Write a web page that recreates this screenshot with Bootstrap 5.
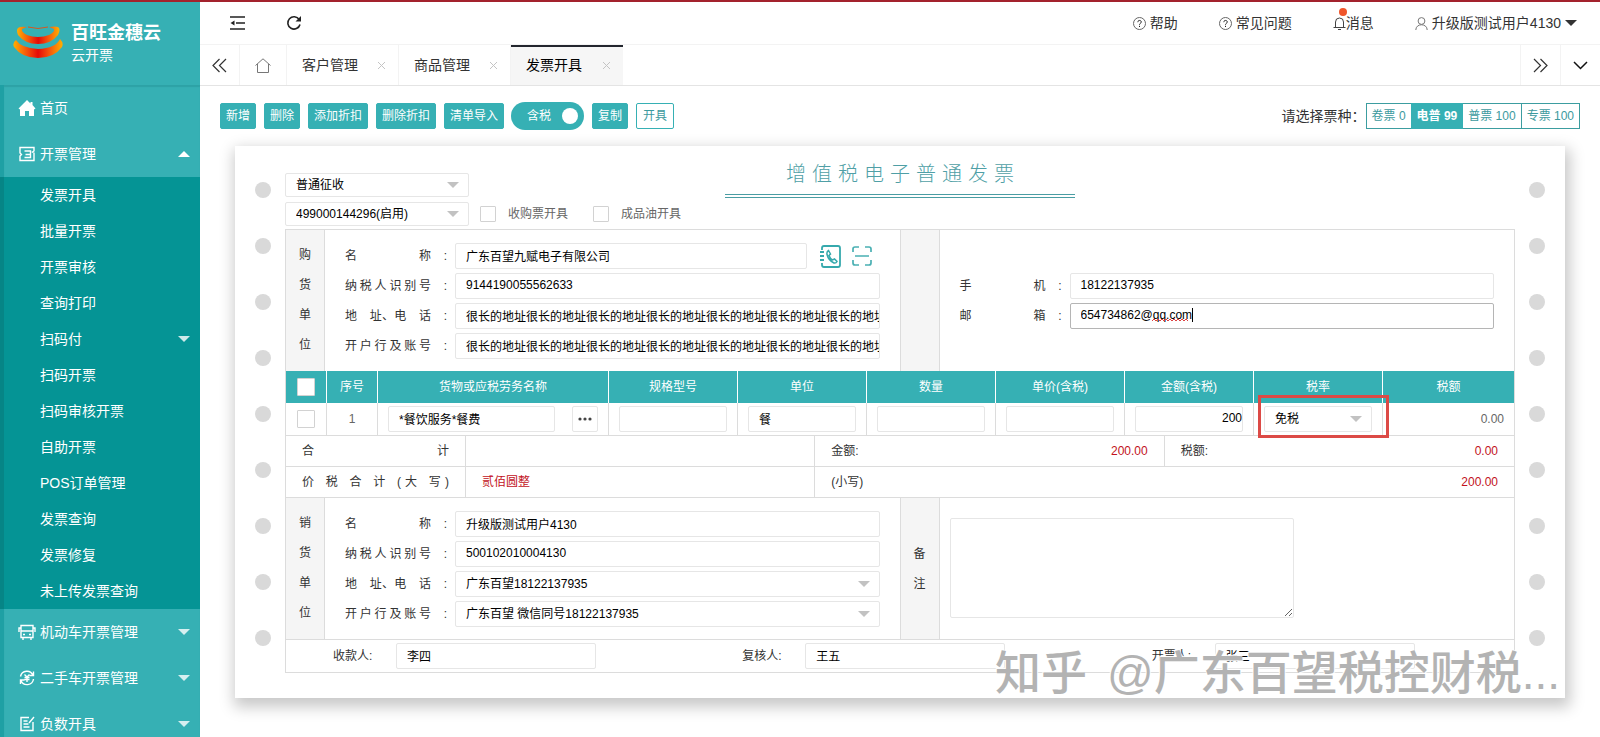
<!DOCTYPE html>
<html lang="zh-CN">
<head>
<meta charset="utf-8">
<meta name="viewport" content="width=device-width, initial-scale=1">
<title>百旺金穗云 - 云开票</title>
<link href="https://cdn.jsdelivr.net/npm/bootstrap@5.3.0/dist/css/bootstrap.min.css" rel="stylesheet">
<style>
:root{--teal:#36b0b4;--teal-dark:#059495;--line:#dcdcdc;--soft:#e6e6e6}
body{font-family:"Liberation Sans","Noto Sans CJK SC",sans-serif;font-size:14px;line-height:20px;color:#333;background:#fff}
a{color:inherit;text-decoration:none}
.topline{height:2px;background:#a3222d;flex:none}
/* sidebar */
.side{width:200px;flex:none;background:var(--teal);color:#fff}
.brand{height:83px;padding:0 0 2px 13px;gap:8px}
.brand-name{font-size:18px;line-height:24px;font-weight:700}
.menu-wrap{border-left:4px solid #1fa0a4;box-shadow:inset 0 2px 1px rgba(0,90,90,.15)}
.menu-item{height:46px;padding:0 10px 0 14px}
.menu-item svg{width:18px;height:18px;margin-right:4px}
.menu-item svg.ico-s{width:16px;height:16px;margin:0 5px 0 1px}
.sub{background:var(--teal-dark);margin-left:-4px;border-left:4px solid #068586}
.sub a{height:36px;padding:0 10px 0 36px}
.tri{width:0;height:0;border:6px solid transparent;border-bottom-width:0;border-top-color:currentColor;opacity:.8}
.tri-up{border-bottom:6px solid #fff;border-top-width:0;opacity:1}
/* header */
.head{height:43px;border-bottom:1px solid #f3f3f3;padding:0 23px 0 29px}
.head-links{gap:41px}
.icon-btn{border:0;background:none;padding:0;display:flex;align-items:center;justify-content:center}
.msg-dot{position:absolute;left:6px;top:-5px;width:8px;height:8px;border-radius:50%;background:#f0562b}
.tabs{height:41px;border-bottom:1px solid #e4e4e4}
.tabs-cell{width:40px;border-right:1px solid #f3f3f3}
.tabs-home{width:47px}
.tab-item{width:112px;padding:0 12px 0 15px;border-right:1px solid #f3f3f3}
.tab-item.current{border-top:2px solid #23262e;padding-bottom:2px;background:#f6f6f6;color:#000;border-right:0}
.tab-right{width:40px;border-left:1px solid #f3f3f3}
/* toolbar */
.tools{padding:16px 20px 0;gap:8px}
.btn-t{--bs-btn-bg:var(--teal);--bs-btn-color:#fff;--bs-btn-border-color:var(--teal);--bs-btn-hover-bg:#2c9fa3;--bs-btn-hover-color:#fff;font-size:12px;line-height:18px;padding:3px 5px;border-radius:2px}
.btn-line{--bs-btn-bg:#fff;--bs-btn-color:#3c9a9e;padding:3px 6px}
.tax-switch{height:28px;width:73px;border-radius:14px;background:var(--teal);color:#fff;font-size:12px;padding:0 6px 0 16px;margin:0 0 0 -1px;cursor:pointer}
.tax-switch input{appearance:none;width:16px;height:16px;border-radius:50%;background:#fff;margin:0}
.kinds .btn{font-size:12px;line-height:18px;padding:3px 5px;border:1px solid #3c9da0;color:#3c9a9e;border-radius:0}
.kinds .btn-check:checked+.btn{background:var(--teal);border-color:var(--teal);color:#fff;font-weight:700}
/* invoice sheet */
.sheet{margin:16px 35px 0;padding:0 20px 25px;box-shadow:2px 6px 14px 3px rgba(0,0,0,.22);font-size:12px;line-height:18px}
.holes{width:16px;flex:none;gap:40px;padding-top:36px}
.holes i{width:16px;height:16px;border-radius:50%;background:#d9d9d9}
.sheet-body{padding:0 14px}
.sheet-top{height:83px;position:relative}
.sheet-title{position:absolute;left:50%;top:14px;width:350px;margin-left:-175px;height:38px;border-bottom:4px double #4a9da3;color:#4f9fa6}
.sheet-title h1{font-family:KaiTi,"Liberation Serif","Noto Sans CJK SC",serif;font-size:20px;line-height:28px;font-weight:300;width:228px;margin:0 auto;text-align-last:justify}
.fld{display:block;height:26px;width:100%;min-width:0;border:1px solid var(--soft);border-radius:2px;background:#fff;color:#000;font-size:12px;line-height:18px;padding:0 10px 2px}
.fld:focus{outline:0;border-color:#bbb;box-shadow:none}
select.fld{appearance:none;padding-bottom:0;background:#fff url("data:image/svg+xml,%3Csvg xmlns='http://www.w3.org/2000/svg' width='12' height='6'%3E%3Cpath d='M0 0h12L6 6z' fill='%23c2c2c2'/%3E%3C/svg%3E") no-repeat right 9px center}
.top-opts{padding-top:27px;gap:5px}
.top-opts select.fld{width:184px;height:24px}
.box-check{appearance:none;width:16px;height:16px;border:1px solid #d2d2d2;background:#fff;margin:0;flex:none;border-radius:1px}
.opt-label{color:#666;padding-left:12px}
.frame{border:1px solid var(--line)}
.party{display:grid;grid-template-columns:39px minmax(0,1fr) 40px minmax(0,1fr)}
.vcol{background:#f5f5f5;padding-top:10px;line-height:30px;border-right:1px solid var(--line)}
.vcol.mid{border-left:1px solid var(--line);padding-top:0}
.party-form{padding:13px 20px 12px;display:flex;flex-direction:column;gap:4px}
.frow{display:flex;align-items:center}
.frow label{width:86px;flex:none;text-align-last:justify}
.colon{width:24px;flex:none;text-align:right;padding-right:8px}
.fld.live{border-color:#b5b5b5}
.typed{position:absolute;left:82px;top:4px;pointer-events:none}
.items{table-layout:fixed;width:100%;border-collapse:separate;border-spacing:0}
.items th{height:32px;background:var(--teal);color:#fff;font-weight:400;text-align:center;border-right:1px solid #fff;padding:0}
.items td{height:33px;border-right:1px solid var(--line);border-bottom:1px solid var(--line);padding:0 10px;color:#666}
.items th:last-child,.items td:last-child{border-right:0}
.c-check{width:41px}.c-no{width:51px}.c-name{width:231px}.c-std{width:129px}
.items .box-check{width:18px;height:18px;display:block;margin:0 auto}
.more-btn{width:26px;height:26px;border:1px solid var(--soft);background:#fff;border-radius:2px;padding:0;flex:none;display:flex;align-items:center;justify-content:center}
.rate-box{position:absolute;left:-6px;right:-17px;top:-11px;bottom:-6px;border:3px solid #dc4a46;pointer-events:none}
.sum{display:grid;grid-template-columns:180px minmax(0,1fr) minmax(0,1fr) minmax(0,1fr);border-bottom:1px solid var(--line);height:31px}
.sum>div{display:flex;align-items:center;justify-content:space-between;padding:0 16px;border-right:1px solid var(--line)}
.sum>div:last-child{border-right:0}
.sum .wide{grid-column:span 2}
.just{display:block;width:100%;text-align-last:justify}
.red{color:#c2121c}
.note{height:100px;width:60%;margin:20px 0 0 10px;resize:both}
.signers{display:grid;grid-template-columns:repeat(3,minmax(0,1fr));border-top:1px solid var(--line);padding:3px 0}
.signers>div{display:flex;align-items:center;padding-left:47px}
.signers label{width:63px;flex:none}
.signers .fld{width:200px}
.wmark{position:absolute;right:5px;bottom:-3px;font-size:46px;line-height:56px;color:#b3b3b3;font-weight:500;gap:20px;white-space:nowrap;pointer-events:none;text-shadow:-1px -1px 1px #fff,1px 1px 1px #fff}
</style>
</head>
<body>
<div class="vh-100 d-flex flex-column overflow-hidden">
<div class="topline"></div>
<div class="d-flex flex-grow-1 overflow-hidden">
<aside class="side overflow-hidden">
  <div class="brand d-flex align-items-center">
    <svg width="50" height="33" viewBox="0 0 50 33" aria-hidden="true">
      <defs><linearGradient id="lg"><stop offset="0" stop-color="#ffb000"/><stop offset=".28" stop-color="#f5520c"/><stop offset=".5" stop-color="#e60a08"/><stop offset=".72" stop-color="#f5520c"/><stop offset="1" stop-color="#ffb000"/></linearGradient></defs>
      <path d="M5 2Q3 4 5 9Q12 18 25 18Q38 18 45 9Q48 3 45 1Q42 0 36 1L41 3Q42 6 36 9Q31 11 25 11Q19 11 14 9Q8 6 9 3L14 1Q7 0 5 2Z" fill="url(#lg)"/>
      <path d="M3 14Q-1 17 1 21Q9 32 25 32Q41 32 49 21Q51 17 47 13Q43 22 25 23Q8 22 3 14Z" fill="url(#lg)"/>
      <path d="M15 1Q25 4 35 1" stroke="#d6571f" fill="none"/>
    </svg>
    <div><div class="brand-name">百旺金穗云</div><div>云开票</div></div>
  </div>
  <nav class="menu-wrap">
    <a href="#" class="menu-item d-flex align-items-center"><svg viewBox="0 0 18 18"><path d="M9 1 0.5 9.5 2 10.5V17h5v-5h4v5h5v-6.500l1.500-1L14.500 6V3h-2v1.500z" fill="#fff"/></svg>首页</a>
    <a href="#" class="menu-item d-flex align-items-center"><svg class="ico-s" viewBox="1 1 16 16" fill="none" stroke="#fff" stroke-width="1.400"><path d="M2 6V2.500h14V6L14.500 7 16 8v7.500H2V11l1.500-1.500L2 8zM6.500 6h6v3.500l-5 0M12.500 9.500V12.500h-6"/></svg>开票管理<span class="tri tri-up ms-auto"></span></a>
    <div class="sub">
      <a href="#" class="d-flex align-items-center">发票开具</a>
      <a href="#" class="d-flex align-items-center">批量开票</a>
      <a href="#" class="d-flex align-items-center">开票审核</a>
      <a href="#" class="d-flex align-items-center">查询打印</a>
      <a href="#" class="d-flex align-items-center">扫码付<span class="tri ms-auto"></span></a>
      <a href="#" class="d-flex align-items-center">扫码开票</a>
      <a href="#" class="d-flex align-items-center">扫码审核开票</a>
      <a href="#" class="d-flex align-items-center">自助开票</a>
      <a href="#" class="d-flex align-items-center">POS订单管理</a>
      <a href="#" class="d-flex align-items-center">发票查询</a>
      <a href="#" class="d-flex align-items-center">发票修复</a>
      <a href="#" class="d-flex align-items-center">未上传发票查询</a>
    </div>
    <a href="#" class="menu-item d-flex align-items-center"><svg viewBox="0 0 18 18" fill="none" stroke="#fff" stroke-width="1.400"><path d="M3 14.500V2.500h12v12zM3 8h12M3 5H1v4M15 5h2v4M5 11.500h2M11 11.500h2M5 14.500V17M13 14.500V17"/></svg>机动车开票管理<span class="tri ms-auto"></span></a>
    <a href="#" class="menu-item d-flex align-items-center"><svg class="ico-s" viewBox="1 1 16 16" fill="none" stroke="#fff" stroke-width="1.400"><path d="M2.500 7.500A6.500 6.500 0 0 1 15 6.500M15.500 2.500v4h-4M15.500 10A6.500 6.500 0 0 1 3 11.500M2.500 15v-4h4M6.500 5.500 9 8l2.500-2.500M9 8v5M6.500 8.500h5M6.500 10.500h5"/></svg>二手车开票管理<span class="tri ms-auto"></span></a>
    <a href="#" class="menu-item d-flex align-items-center"><svg class="ico-s" viewBox="1 1 16 16" fill="none" stroke="#fff" stroke-width="1.400"><path d="M11 2.500H3v13h12V7M5.500 6h4M5.500 9h5M5.500 12h6M11 8l5-6"/></svg>负数开具<span class="tri ms-auto"></span></a>
  </nav>
</aside>

<main class="flex-grow-1 overflow-hidden">
  <header class="head d-flex align-items-center justify-content-between">
    <div class="d-flex" style="gap:40px">
      <button class="icon-btn" type="button" aria-label="收起菜单"><svg width="17" height="16" viewBox="0 0 17 16" fill="none" stroke="#222" stroke-width="1.600"><path d="M1 2h15M7 8h9M1 14h15"/><path d="M5.500 5.500v5L1.500 8z" fill="#222" stroke="none"/></svg></button>
      <button class="icon-btn" type="button" aria-label="刷新"><svg width="16" height="16" viewBox="0 0 16 16" fill="none" stroke="#222" stroke-width="1.600"><path d="M13.200 4.500A6.200 6.200 0 1 0 14 9.500"/><path d="M15 1v5.500H9.500z" fill="#222" stroke="none"/></svg></button>
    </div>
    <div class="head-links d-flex align-items-center">
      <a href="#" class="d-flex align-items-center"><svg class="me-1" width="13" height="13" viewBox="0 0 13 13" fill="none" stroke="#666"><circle cx="6.500" cy="6.500" r="6"/><path d="M4.800 5.200c0-2.400 3.500-2.200 3.500-.2 0 1.300-1.800 1.300-1.800 2.700M6.500 8.800v1.200" stroke="#222"/></svg>帮助</a>
      <a href="#" class="d-flex align-items-center"><svg class="me-1" width="13" height="13" viewBox="0 0 13 13" fill="none" stroke="#666"><circle cx="6.500" cy="6.500" r="6"/><path d="M4.800 5.200c0-2.400 3.500-2.200 3.500-.2 0 1.300-1.800 1.300-1.800 2.700M6.500 8.800v1.200" stroke="#222"/></svg>常见问题</a>
      <a href="#" class="d-flex align-items-center position-relative"><svg width="13" height="15" viewBox="0 0 13 15" fill="none" stroke="#444"><path d="M.5 11.500h12M2.500 11.500V6a4 4 0 0 1 8 0v5.500M5 13.500h3"/></svg>消息<span class="msg-dot"></span></a>
      <a href="#" class="d-flex align-items-center"><svg class="me-1" width="13" height="13" viewBox="0 0 13 13" fill="none" stroke="#777"><circle cx="6.500" cy="4" r="3.400"/><path d="M.8 13c0-7 11.400-7 11.400 0"/></svg>升级版测试用户4130<span class="tri ms-1 opacity-100"></span></a>
    </div>
  </header>

  <nav class="tabs d-flex align-items-stretch">
    <button class="icon-btn tabs-cell" type="button" aria-label="向左"><svg width="15" height="15" viewBox="0 0 15 15" fill="none" stroke="#333" stroke-width="1.200"><path d="M7.500 1 1 7.500 7.500 14M14 1 7.500 7.500 14 14"/></svg></button>
    <a href="#" class="tabs-cell tabs-home d-flex align-items-center justify-content-center" aria-label="主页"><svg width="16" height="15" viewBox="0 0 16 15" fill="none" stroke="#777"><path d="M.5 7.500 8 .8l7.500 6.700M2.500 6v8.500h11V6"/></svg></a>
    <a href="#" class="tab-item d-flex align-items-center justify-content-between">客户管理<svg width="9" height="9" viewBox="0 0 9 9" stroke="#c4c4c4"><path d="M1 1l7 7M8 1 1 8"/></svg></a>
    <a href="#" class="tab-item d-flex align-items-center justify-content-between">商品管理<svg width="9" height="9" viewBox="0 0 9 9" stroke="#c4c4c4"><path d="M1 1l7 7M8 1 1 8"/></svg></a>
    <a href="#" class="tab-item current d-flex align-items-center justify-content-between">发票开具<svg width="9" height="9" viewBox="0 0 9 9" stroke="#c4c4c4"><path d="M1 1l7 7M8 1 1 8"/></svg></a>
    <button class="icon-btn tab-right ms-auto" type="button" aria-label="向右"><svg width="15" height="15" viewBox="0 0 15 15" fill="none" stroke="#333" stroke-width="1.200"><path d="M1 1l6.500 6.500L1 14M7.500 1 14 7.500 7.500 14"/></svg></button>
    <button class="icon-btn tab-right" type="button" aria-label="更多"><svg width="15" height="9" viewBox="0 0 15 9" fill="none" stroke="#111" stroke-width="1.500"><path d="M1 1l6.500 6.500L14 1"/></svg></button>
  </nav>

  <div class="tools d-flex align-items-center">
    <button class="btn btn-t" type="button">新增</button>
    <button class="btn btn-t" type="button">删除</button>
    <button class="btn btn-t" type="button">添加折扣</button>
    <button class="btn btn-t" type="button">删除折扣</button>
    <button class="btn btn-t" type="button">清单导入</button>
    <label class="tax-switch d-flex align-items-center justify-content-between">含税<input type="checkbox" role="switch" checked></label>
    <button class="btn btn-t" type="button">复制</button>
    <button class="btn btn-t btn-line" type="button">开具</button>
    <div class="ms-auto d-flex align-items-center">
      <span>请选择票种：</span>
      <div class="btn-group kinds" role="group" aria-label="票种">
        <input class="btn-check" type="radio" name="kind" id="k1"><label class="btn" for="k1">卷票 0</label>
        <input class="btn-check" type="radio" name="kind" id="k2" checked><label class="btn" for="k2">电普 99</label>
        <input class="btn-check" type="radio" name="kind" id="k3"><label class="btn" for="k3">普票 100</label>
        <input class="btn-check" type="radio" name="kind" id="k4"><label class="btn" for="k4">专票 100</label>
      </div>
    </div>
  </div>

  <section class="sheet d-flex position-relative bg-white">
    <div class="holes d-flex flex-column"><i></i><i></i><i></i><i></i><i></i><i></i><i></i><i></i><i></i></div>
    <div class="sheet-body flex-grow-1">
      <div class="sheet-top">
        <div class="sheet-title"><h1>增值税电子普通发票</h1></div>
        <div class="top-opts d-flex flex-column">
          <select class="fld" aria-label="征收方式"><option>普通征收</option></select>
          <div class="d-flex align-items-center">
            <select class="fld" aria-label="开票终端"><option>499000144296(启用)</option></select>
            <input class="box-check" style="margin-left:11px" type="checkbox" id="o1"><label class="opt-label" for="o1">收购票开具</label>
            <input class="box-check" style="margin-left:25px" type="checkbox" id="o2"><label class="opt-label" for="o2">成品油开具</label>
          </div>
        </div>
      </div>

      <div class="frame">
        <div class="party">
          <div class="vcol text-center">购<br>货<br>单<br>位</div>
          <div class="party-form">
            <div class="frow"><label for="b1">名称</label><span class="colon">:</span><input class="fld" id="b1" value="广东百望九赋电子有限公司">
              <button class="icon-btn" style="margin-left:12px" type="button" aria-label="通讯录"><svg width="22" height="23" viewBox="0 0 22 23" fill="none" stroke="#36a9ad" stroke-width="1.800"><path d="M3 5V3q0-2 2-2h14q2 0 2 2v17q0 2-2 2H5q-2 0-2-2v-2M1 7h4M1 11h4M1 15h4"/><path d="M9.500 5.500q-2 1-1.500 4 1.500 6 7 8.500 2 .5 3-1.500l-2.500-2.500-2 1q-2.500-1.500-3.500-4.500l1.500-1.500z" stroke-width="1.500"/></svg></button>
              <button class="icon-btn" style="margin-left:11px" type="button" aria-label="扫码"><svg width="20" height="20" viewBox="0 0 20 20" fill="none" stroke="#4ab0b3" stroke-width="1.700"><path d="M1 6V3q0-2 2-2h4M13 1h4q2 0 2 2v3M19 14v3q0 2-2 2h-4M7 19H3q-2 0-2-2v-3M3 10h14"/></svg></button>
              <span style="width:8px" class="flex-shrink-0"></span></div>
            <div class="frow"><label for="b2">纳税人识别号</label><span class="colon">:</span><input class="fld" id="b2" value="9144190055562633"></div>
            <div class="frow"><label for="b3">地　址、电　话</label><span class="colon">:</span><input class="fld pe-0" id="b3" value="很长的地址很长的地址很长的地址很长的地址很长的地址很长的地址很长的地址很长的地址"></div>
            <div class="frow"><label for="b4">开户行及账号</label><span class="colon">:</span><input class="fld pe-0" id="b4" value="很长的地址很长的地址很长的地址很长的地址很长的地址很长的地址很长的地址很长的地址"></div>
          </div>
          <div class="vcol mid"></div>
          <div class="party-form justify-content-center">
            <div class="frow"><label for="p1">手机</label><span class="colon">:</span><input class="fld" id="p1" value="18122137935"></div>
            <div class="frow"><label for="p2">邮箱</label><span class="colon">:</span><div class="position-relative flex-grow-1"><input class="fld live" id="p2" value="654734862@qq.com"><svg class="typed" width="42" height="17" viewBox="0 0 42 17" fill="none" aria-hidden="true"><path d="M0 14l2-2 2 2 2-2 2 2 2-2 2 2 2-2 2 2 2-2 2 2 2-2 2 2 2-2 2 2 2-2 2 2 2-2 2 2" stroke="#d44"/><path d="M40.500 1v14" stroke="#000"/></svg></div></div>
          </div>
        </div>

        <table class="items">
          <colgroup><col class="c-check"><col class="c-no"><col class="c-name"><col class="c-std"><col class="c-std"><col class="c-std"><col class="c-std"><col class="c-std"><col class="c-std"><col></colgroup>
          <thead><tr><th><input class="box-check" type="checkbox" aria-label="全选"></th><th>序号</th><th>货物或应税劳务名称</th><th>规格型号</th><th>单位</th><th>数量</th><th>单价(含税)</th><th>金额(含税)</th><th>税率</th><th>税额</th></tr></thead>
          <tbody><tr>
            <td><input class="box-check" type="checkbox" aria-label="选择第1行"></td>
            <td class="text-center">1</td>
            <td><div class="d-flex justify-content-between" style="gap:17px"><input class="fld" aria-label="名称" value="*餐饮服务*餐费"><button class="more-btn" type="button" aria-label="选择商品"><svg width="14" height="4" viewBox="0 0 14 4" fill="#444"><circle cx="2" cy="2" r="1.600"/><circle cx="7" cy="2" r="1.600"/><circle cx="12" cy="2" r="1.600"/></svg></button></div></td>
            <td><input class="fld" aria-label="规格型号"></td>
            <td><input class="fld" aria-label="单位" value="餐"></td>
            <td><input class="fld" aria-label="数量"></td>
            <td><input class="fld" aria-label="单价"></td>
            <td><input class="fld text-end pe-0" aria-label="金额" value="200"></td>
            <td><div class="position-relative"><select class="fld" aria-label="税率"><option>免税</option></select><span class="rate-box"></span></div></td>
            <td class="text-end">0.00</td>
          </tr></tbody>
        </table>

        <div class="sum"><div><span class="just">合计</span></div><div></div><div><span>金额:</span><span class="red">200.00</span></div><div><span>税额:</span><span class="red">0.00</span></div></div>
        <div class="sum"><div><span class="just">价 税 合 计 (大 写)</span></div><div><span class="red">贰佰圆整</span></div><div class="wide"><span>(小写)</span><span class="red">200.00</span></div></div>

        <div class="party">
          <div class="vcol text-center">销<br>货<br>单<br>位</div>
          <div class="party-form">
            <div class="frow"><label for="s1">名称</label><span class="colon">:</span><input class="fld" id="s1" value="升级版测试用户4130"></div>
            <div class="frow"><label for="s2">纳税人识别号</label><span class="colon">:</span><input class="fld" id="s2" value="500102010004130"></div>
            <div class="frow"><label for="s3">地　址、电　话</label><span class="colon">:</span><select class="fld" id="s3"><option>广东百望18122137935</option></select></div>
            <div class="frow"><label for="s4">开户行及账号</label><span class="colon">:</span><select class="fld" id="s4"><option>广东百望 微信同号18122137935</option></select></div>
          </div>
          <label class="vcol mid text-center d-flex flex-column justify-content-center" for="note"><span>备</span><span>注</span></label>
          <div><textarea class="fld note" id="note"></textarea></div>
        </div>

        <div class="signers">
          <div><label for="g1">收款人:</label><input class="fld" id="g1" value="李四"></div>
          <div><label for="g2">复核人:</label><input class="fld" id="g2" value="王五"></div>
          <div><label for="g3">开票人:</label><input class="fld" id="g3" value="张三"></div>
        </div>
      </div>
    </div>
    <div class="holes d-flex flex-column"><i></i><i></i><i></i><i></i><i></i><i></i><i></i><i></i><i></i></div>
    <div class="wmark d-flex"><span>知乎</span><span>@广东百望税控财税...</span></div>
  </section>
</main>
</div>
</div>
<script src="https://cdn.jsdelivr.net/npm/bootstrap@5.3.0/dist/js/bootstrap.bundle.min.js"></script>
</body>
</html>
